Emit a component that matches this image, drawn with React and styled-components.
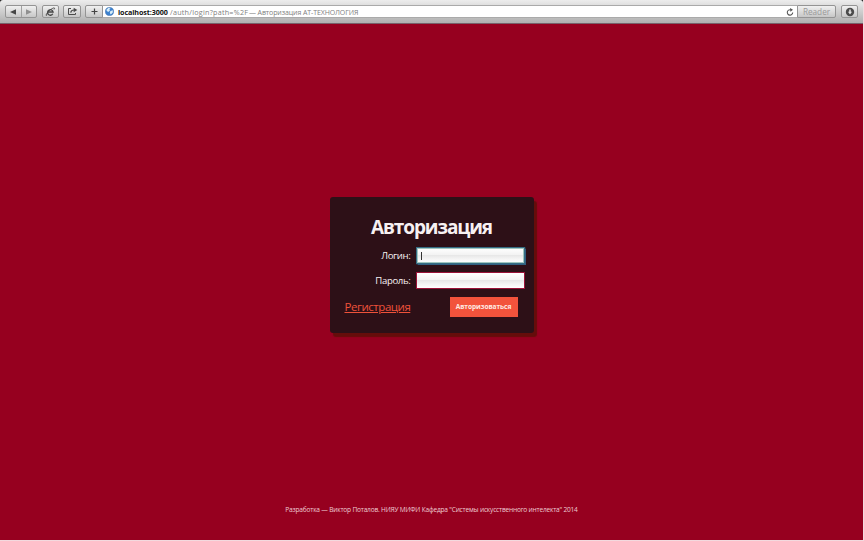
import React from "react";
import styled, { createGlobalStyle } from "styled-components";

const Global = createGlobalStyle`
  * { box-sizing: border-box; }
  html, body { margin: 0; background: #f3d9de; overflow: hidden; }
`;

const Window = styled.div`
  width: 863px;
  height: 540px;
  display: flex;
  flex-direction: column;
  background: linear-gradient(#1a1a1a 4px, #96001f 4px);
  font-family: "Open Sans", "Noto Sans", sans-serif;
`;

const Toolbar = styled.header`
  flex: none;
  height: 24px;
  display: flex;
  align-items: center;
  padding: 0 5px;
  border-bottom: 1px solid #77616a;
  border-radius: 3px 3px 0 0;
  background: linear-gradient(#ededed, #d4d4d4 40%, #b0b0b0);
`;

const ToolButton = styled.button`
  flex: none;
  width: ${(p) => p.$width}px;
  height: 13px;
  margin: 0 ${(p) => p.$gap ?? 0}px 0 0;
  padding: 0;
  display: flex;
  align-items: center;
  justify-content: center;
  border: 1px solid #949494;
  border-radius: ${(p) => p.$radius || "2px"};
  background: linear-gradient(#f0f0f0, #c7c7c7);
  color: #444;
  svg { display: block; }
`;

const NavPair = styled(ToolButton)`
  justify-content: space-evenly;
`;

const Divider = styled.span`
  width: 1px;
  height: 11px;
  background: #a0a0a0;
`;

const AddressBar = styled.div`
  flex: 1;
  min-width: 0;
  height: 13px;
  display: flex;
  align-items: center;
  padding: 0 3px 0 2px;
  border: 1px solid #aaa;
  border-width: 1px 0;
  background: #fff;
`;

const Address = styled.div`
  flex: 1;
  margin-left: 4px;
  padding-top: 1px;
  display: flex;
  white-space: pre;
  font: 7.2px/11px "Open Sans", sans-serif;
  color: #808080;
`;

const Host = styled.span`
  width: 51px;
  font-weight: 700;
  color: #111;
  letter-spacing: -0.1px;
`;

const Path = styled.span`
  width: 79px;
  padding-left: 1px;
  letter-spacing: 0.25px;
`;

const PageTitle = styled.span`
  margin-left: 1px;
  font-size: 7px;
  letter-spacing: -0.1px;
`;

const ReaderButton = styled(ToolButton)`
  font: 400 8.2px/10px "Open Sans", sans-serif;
  color: #999;
`;

const Page = styled.main`
  flex: 1;
  display: flex;
  flex-direction: column;
  align-items: center;
  padding-top: 173px;
`;

const Card = styled.form`
  width: 204px;
  height: 136px;
  padding: 16px 9px 0 15px;
  border-radius: 3px;
  background: #2d1017;
  box-shadow: 3px 4px 1px #650d0b;
  color: #f7f1f2;
`;

const Title = styled.h1`
  margin: 0 0 6px;
  padding-right: 6px;
  font-size: 19px;
  line-height: 28px;
  font-weight: 700;
  letter-spacing: -1.1px;
  text-align: center;
  white-space: nowrap;
`;

const Field = styled.label`
  height: 16px;
  margin-bottom: 9px;
  display: flex;
  align-items: center;
  justify-content: space-between;
`;

const FieldName = styled.span`
  width: 66px;
  padding-top: 2px;
  text-align: right;
  font-size: 9.6px;
  line-height: 16px;
  letter-spacing: -0.35px;
`;

const Input = styled.span`
  width: 107px;
  height: 15px;
  margin-right: 1px;
  padding: 4px;
  display: flex;
  background: linear-gradient(#fff, #f3f3f3 45%, #e8e8e8 50%, #f5f5f5 75%, #fff);
  box-shadow: ${(p) => (p.$focused ? "inset 0 0 0 1px #9fc5be, 0 0 0 1px #356c83, 0 0 1px 1.5px #315f80" : "0 0 0 1px #9b1238")};
`;

const Caret = styled.i`
  width: 1px;
  height: 8px;
  background: #333;
`;

const Actions = styled.div`
  display: flex;
  align-items: flex-start;
  justify-content: space-between;
  padding-right: 7px;
`;

const RegisterLink = styled.a`
  color: #ee523b;
  font-size: 11.5px;
  line-height: 20px;
  letter-spacing: -0.46px;
  text-decoration: underline;
  text-decoration-thickness: 1px;
  text-underline-offset: 1px;
`;

const Submit = styled.button`
  width: 68px;
  height: 20px;
  padding: 0;
  border: 0;
  background: #f2533c;
  color: #ffe9e2;
  font: 700 6.6px/20px "Open Sans", sans-serif;
  letter-spacing: -0.05px;
  white-space: nowrap;
`;

const Footer = styled.footer`
  margin-top: auto;
  padding-bottom: 24px;
  color: #edcbd2;
  font-size: 6.6px;
  line-height: 12px;
  letter-spacing: -0.21px;
  white-space: nowrap;
`;

const CompassIcon = () => (
  <svg width="11" height="10" viewBox="0 0 11 10" fill="none" stroke="#464646">
    <path d="M7.8 6.8A2.8 2.8 0 1 1 8.1 5H3.2" strokeWidth="1.3" />
    <path d="M2.2 7.8C.3 9.6 1 7.1 3.5 4.5S9.5.1 9.5 1.2c0 .5-.2.9-.5 1.3" strokeWidth=".9" />
  </svg>
);

const ShareIcon = () => (
  <svg width="11" height="9" viewBox="0 0 11 9" fill="none" stroke="#4b4b4b">
    <path d="M4 1.5H1.5v6h7V6" strokeWidth="1" />
    <path d="M3.7 5.7C4 3.8 5 3 7 3" strokeWidth="1.2" />
    <path d="M6.7.8 10.3 3 6.7 5.3z" fill="#4b4b4b" stroke="none" />
  </svg>
);

const GlobeIcon = () => (
  <svg width="9" height="9" viewBox="0 0 9 9">
    <circle cx="4.5" cy="4.5" r="4.1" fill="#3d82cf" stroke="#3266a5" strokeWidth=".5" />
    <path d="M1.2 3 3.5.8l2 .6-1.2 1.4.7 1-2 1.2zM5.4 4.1l2.5-.8-.2 2.5-2 1.8-.9-1.8z" fill="#d9effa" />
  </svg>
);

const ReloadIcon = () => (
  <svg width="8" height="8" viewBox="0 0 8 8">
    <path d="M6.7 4.4A2.7 2.7 0 1 1 4.7 1.8" fill="none" stroke="#555" strokeWidth="1.1" />
    <path d="M4 0 7 1.8 4.4 3.7z" fill="#555" />
  </svg>
);

const DownloadIcon = () => (
  <svg width="10" height="10" viewBox="0 0 10 10">
    <circle cx="5" cy="5" r="4.2" fill="#4b4b4b" />
    <path d="M4.2 2.4h1.6v2.3h1.2L5 7.4 3 4.7h1.2z" fill="#e2e2e2" />
  </svg>
);

export default function App() {
  return (
    <>
      <Global />
      <Window>
        <Toolbar>
          <NavPair $width={32} $gap={5}>
            <svg width="6" height="6" viewBox="0 0 6 6"><path d="M6 .3v5.4L0 3z" fill="#464646" /></svg>
            <Divider />
            <svg width="6" height="6" viewBox="0 0 6 6"><path d="M0 .3v5.4L6 3z" fill="#909090" /></svg>
          </NavPair>
          <ToolButton $width={17} $gap={4}><CompassIcon /></ToolButton>
          <ToolButton $width={18} $gap={4}><ShareIcon /></ToolButton>
          <ToolButton $width={18} $radius="2px 0 0 2px">
            <svg width="7" height="7" viewBox="0 0 7 7"><path d="M3.5.5v6M.5 3.5h6" stroke="#444" strokeWidth="1.2" /></svg>
          </ToolButton>
          <AddressBar>
            <GlobeIcon />
            <Address>
              <Host>localhost:3000</Host>
              <Path>/auth/login?path=%2F</Path>
              <PageTitle>— Авторизация АТ-ТЕХНОЛОГИЯ</PageTitle>
            </Address>
            <ReloadIcon />
          </AddressBar>
          <ReaderButton $width={39} $gap={5} $radius="0 2px 2px 0">Reader</ReaderButton>
          <ToolButton $width={17}><DownloadIcon /></ToolButton>
        </Toolbar>
        <Page>
          <Card>
            <Title>Авторизация</Title>
            <Field>
              <FieldName>Логин:</FieldName>
              <Input $focused><Caret /></Input>
            </Field>
            <Field>
              <FieldName>Пароль:</FieldName>
              <Input />
            </Field>
            <Actions>
              <RegisterLink>Регистрация</RegisterLink>
              <Submit type="button">Авторизоваться</Submit>
            </Actions>
          </Card>
          <Footer>Разработка — Виктор Поталов. НИЯУ МИФИ Кафедра "Системы искусственного интелекта" 2014</Footer>
        </Page>
      </Window>
    </>
  );
}
